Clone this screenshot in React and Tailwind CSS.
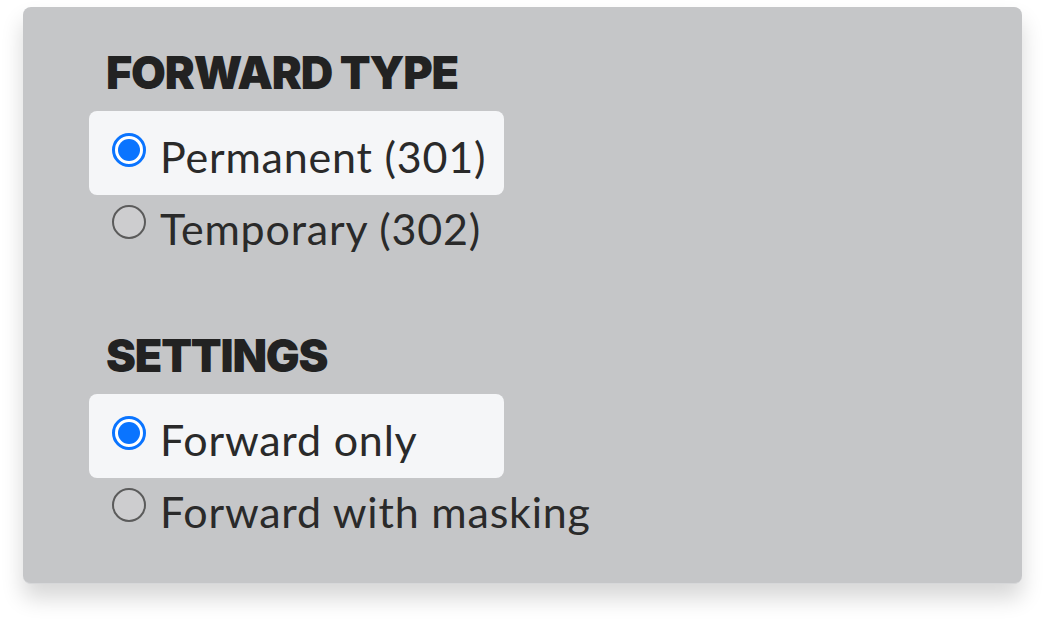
import React from "react";

function Radio({ checked }) {
  if (checked) {
    return (
      <span className="flex h-[34px] w-[34px] shrink-0 items-center justify-center rounded-full border-[3px] border-[#0a74ff] bg-white">
        <span className="h-[22px] w-[22px] rounded-full bg-[#0a74ff]" />
      </span>
    );
  }
  return (
    <span className="h-[34px] w-[34px] shrink-0 rounded-full border-2 border-[#5b5b5b] bg-[#cdcdcf]" />
  );
}

const textFont = { fontFamily: "Lato, 'Noto Sans', sans-serif" };

function Option({ checked, label }) {
  if (checked) {
    return (
      <div className="flex h-[84px] w-[415px] items-start gap-[14px] rounded-lg bg-[#f5f6f8] pl-[23px] pt-[22px]">
        <Radio checked />
        <span className="mt-[7px] text-[43px] leading-[34px] tracking-[0.8px] text-[#2a2a2a]" style={textFont}>
          {label}
        </span>
      </div>
    );
  }
  return (
    <div className="flex h-[60px] items-start gap-[14px] pl-[23px] pt-[10px]">
      <Radio />
      <span className="mt-[7px] text-[43px] leading-[34px] tracking-[0.8px] text-[#2a2a2a]" style={textFont}>
        {label}
      </span>
    </div>
  );
}

function Heading({ children }) {
  return (
    <h2
      className="ml-[17px] text-[45px] font-black leading-none tracking-[-1.2px] text-[#222]"
      style={{ fontFamily: "Inter, 'Noto Sans', sans-serif" }}
    >
      {children}
    </h2>
  );
}

export default function App() {
  return (
    <div className="h-[622px] w-[1045px] bg-white pl-[23px] pt-[7px]">
      <div className="flex h-[577px] w-[999px] flex-col rounded-lg border-b border-[#d6d7d9] bg-[#c5c6c8] pl-[66px] pt-[43px] shadow-[0_14px_22px_rgba(0,0,0,0.16)]">
        <Heading>FORWARD TYPE</Heading>
        <div className="mt-[16px] flex flex-col">
          <Option checked label="Permanent (301)" />
          <Option label="Temporary (302)" />
        </div>
        <div className="mt-[78px]">
          <Heading>SETTINGS</Heading>
        </div>
        <div className="mt-[16px] flex flex-col">
          <Option checked label="Forward only" />
          <Option label="Forward with masking" />
        </div>
      </div>
    </div>
  );
}
